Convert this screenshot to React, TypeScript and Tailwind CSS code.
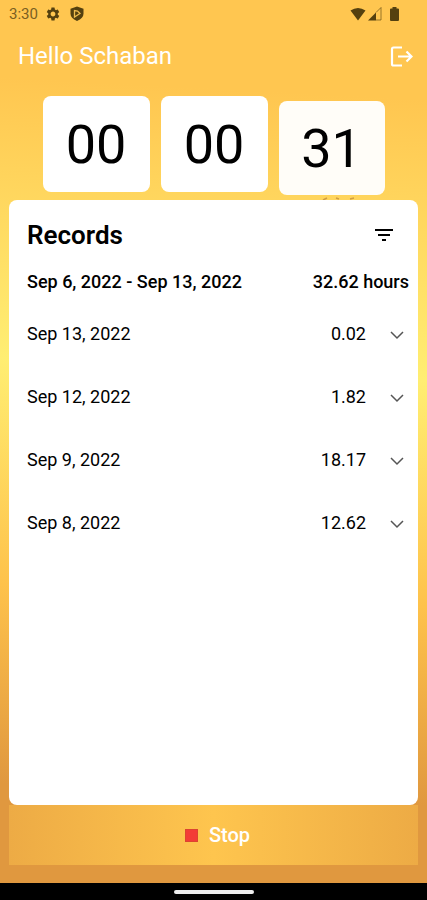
import * as React from 'react'
import { MdFilterList, MdSettings } from 'react-icons/md'

const records = [
  { date: 'Sep 13, 2022', hours: '0.02' },
  { date: 'Sep 12, 2022', hours: '1.82' },
  { date: 'Sep 9, 2022', hours: '18.17' },
  { date: 'Sep 8, 2022', hours: '12.62' },
]

export default function App() {
  return (
    <div className="min-h-screen flex flex-col font-[Roboto,sans-serif] text-black">
      <div className="flex-1 flex flex-col bg-[linear-gradient(183deg,#ffc650_0%,#ffc650_11%,#ffee72_42%,#fec24b_67%,#e0983f_89%,#e0983f_100%)]">
        <StatusBar />
        <header className="flex items-center justify-between h-14 pl-[18px] pr-3.5">
          <h1 className="text-2xl text-white">Hello Schaban</h1>
          <button aria-label="Log out" className="text-white">
            <LogoutIcon />
          </button>
        </header>
        <Timer />
        <main className="flex-1 flex flex-col mx-[9px]">
          <Records />
          <button className="flex items-center justify-center gap-[11px] h-15 mb-[18px] pl-2 text-xl font-medium text-white bg-[linear-gradient(90deg,#edab45,#fec54e_50%,#edab45)]">
            <span className="size-[13px] bg-[#f33b36] border border-[#dc4430]" />
            Stop
          </button>
        </main>
      </div>
      <div className="h-[17px] bg-black flex items-center justify-center">
        <div className="w-20 h-1 rounded-full bg-[#eeeeee]" />
      </div>
    </div>
  )
}

function StatusBar() {
  return (
    <div className="flex items-center justify-between h-7 pl-[9px] pr-7 text-[#54400f]">
      <div className="flex items-center">
        <span className="text-[15px] text-[#7a5f22]">3:30</span>
        <MdSettings className="size-4 ml-[7px]" />
        <svg viewBox="0 0 14 16" className="w-3.5 h-4 ml-[9px]">
          <path fill="currentColor" d="M7 .5 13.500 2.800v5q0 4.500-6.500 7.200-6.500-2.700-6.500-7.200v-5z" />
          <path fill="none" stroke="#eebb4d" strokeWidth="1.300" d="M4.500 4.500v6.500l5.500-3.500-2.500-2.500z" />
        </svg>
      </div>
      <div className="flex items-center">
        <svg viewBox="0 0 16 14" className="w-4 h-3.5">
          <path fill="currentColor" d="M.5 3.500q7.500-5 15 0L8 13.500z" />
        </svg>
        <svg viewBox="0 0 14 14" className="size-3.5 ml-0.5">
          <path fill="currentColor" d="M0 13.500 8 5.500v8z" />
          <path fill="none" stroke="currentColor" strokeOpacity=".6" d="M8 5.500l5-5V13H8" />
        </svg>
        <svg viewBox="0 0 9 14" className="w-[9px] h-3.5 ml-2">
          <path fill="currentColor" d="M2.500 0h4v1.500H8q1 0 1 1V13q0 1-1 1H1q-1 0-1-1V2.500q0-1 1-1h1.500z" />
        </svg>
      </div>
    </div>
  )
}

function LogoutIcon() {
  return (
    <svg viewBox="0 0 24 24" className="size-6" fill="none" stroke="currentColor" strokeWidth="2.200">
      <path d="M13 3.500H4.500q-1.500 0-1.500 1.500v15q0 1.500 1.500 1.500H13" />
      <path d="M9 12.500h13M17.500 7.500l5 5-5 5" />
    </svg>
  )
}

function Timer() {
  return (
    <div role="timer" className="relative flex justify-center gap-[11px] h-[116px] pt-3">
      <TimerCard value="00" />
      <TimerCard value="00" />
      {/* seconds are caught half way through their bounce */}
      <div className="pt-[5px]">
        <div className="w-[106px] h-[94px] rounded-lg bg-[#fffdf8] flex items-center justify-center text-[54px]">31</div>
      </div>
      <svg viewBox="0 0 34 3" className="absolute right-[71px] bottom-0 w-[34px] h-[3px]" stroke="#d09d43" strokeWidth="1.500">
        <path d="M1 3l4-2M14 1l3 1M28 2l4-1" />
      </svg>
    </div>
  )
}

function TimerCard({ value }: { value: string }) {
  return (
    <div className="w-[107px] h-24 rounded-lg bg-white flex items-center justify-center text-[54px]">{value}</div>
  )
}

function Records() {
  return (
    <section className="flex-1 rounded-lg bg-white pl-[18px]">
      <div className="flex items-center justify-between h-[70px] pr-[22px]">
        <h2 className="text-[26px] font-semibold">Records</h2>
        <button aria-label="Filter records">
          <MdFilterList className="size-6" />
        </button>
      </div>
      <div className="flex items-center justify-between h-6 pr-[9px] text-lg font-medium">
        <span>Sep 6, 2022 - Sep 13, 2022</span>
        <span>32.62 hours</span>
      </div>
      <ul className="pt-2">
        {records.map(({ date, hours }) => (
          <li key={date} className="flex items-center h-[63px] pr-[9px] text-lg">
            <span className="flex-1">{date}</span>
            <span>{hours}</span>
            <button aria-label={`Show ${date}`} className="ml-[19px] text-[#555555]">
              <svg viewBox="0 0 24 24" className="size-6" fill="none" stroke="currentColor" strokeWidth="1.500">
                <path d="M6 10l6 6 6-6" />
              </svg>
            </button>
          </li>
        ))}
      </ul>
    </section>
  )
}
